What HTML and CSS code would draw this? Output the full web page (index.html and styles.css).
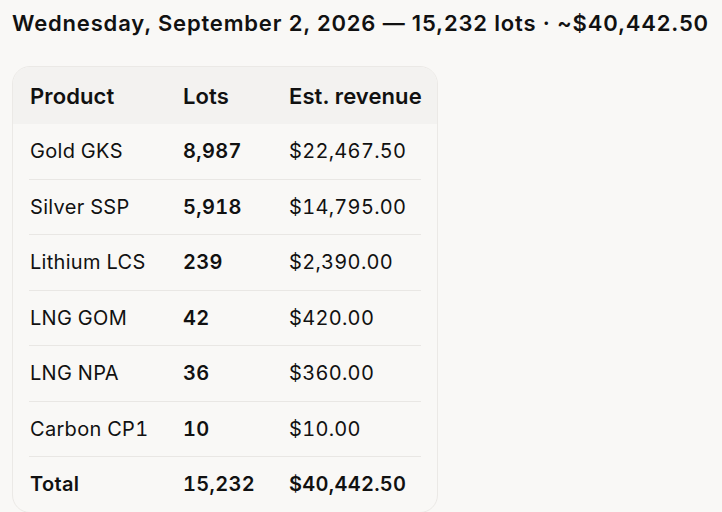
FILE: index.html
```html
<!DOCTYPE html>
<html>
<head>
<meta charset="utf-8">
<link rel="stylesheet" href="styles.css">
</head>
<body>
<h1 class="title">Wednesday, September 2, 2026 — 15,232 lots · ~$40,442.50</h1>
<div class="card">
  <div class="row head">
    <div>Product</div><div>Lots</div><div>Est. revenue</div>
  </div>
  <div class="body">
    <div class="row"><div>Gold GKS</div><div class="num">8,987</div><div>$22,467.50</div></div>
    <div class="row"><div>Silver SSP</div><div class="num">5,918</div><div>$14,795.00</div></div>
    <div class="row"><div>Lithium LCS</div><div class="num">239</div><div>$2,390.00</div></div>
    <div class="row"><div>LNG GOM</div><div class="num">42</div><div>$420.00</div></div>
    <div class="row"><div>LNG NPA</div><div class="num">36</div><div>$360.00</div></div>
    <div class="row"><div>Carbon CP1</div><div class="num">10</div><div>$10.00</div></div>
    <div class="row total"><div>Total</div><div>15,232</div><div>$40,442.50</div></div>
  </div>
</div>
</body>
</html>
```

FILE: styles.css
```css
html, body {
  margin: 0;
  padding: 0;
  background: #f9f8f6;
  color: #111111;
  font-family: Inter, "Noto Sans", sans-serif;
}
body {
  padding: 9px 12px 0 12px;
}
.title {
  margin: 0;
  font-size: 22px;
  font-weight: 600;
  line-height: 28px;
  letter-spacing: 0.83px;
  white-space: nowrap;
}
.card {
  margin-top: 29px;
  width: 424px;
  border: 1px solid #ebe9e6;
  border-radius: 18px;
  overflow: hidden;
}
.row {
  display: grid;
  grid-template-columns: 153px 106px 133px;
  align-items: center;
}
.row > div {
  padding-left: 1px;
  white-space: nowrap;
}
.head {
  background: #f3f2f0;
  height: 57px;
  padding: 0 16px;
  font-size: 22px;
  font-weight: 600;
  letter-spacing: 0.1px;
}
.body {
  padding: 0 16px;
}
.body .row {
  height: 54.5px;
  font-size: 20px;
  letter-spacing: 0.3px;
  font-variant-numeric: tabular-nums;
  border-bottom: 1px solid #e9e7e4;
}
.body .row.total {
  border-bottom: none;
  font-weight: 600;
}
.num {
  font-weight: 600;
}
```
